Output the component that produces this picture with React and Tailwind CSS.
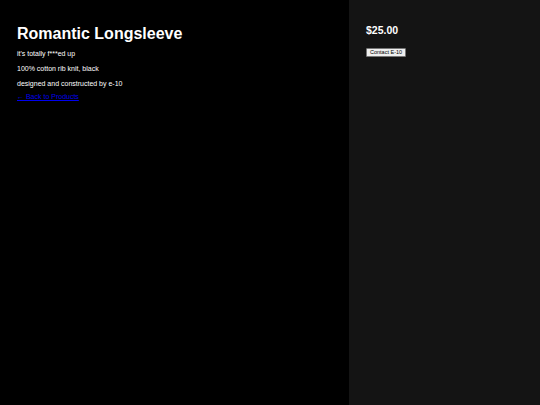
import React from "react";

const App = () => {
  return (
    <div className="flex w-full h-[405px] font-['Liberation_Sans',Arial,sans-serif] text-white">
      {/* details */}
      <div className="w-[349px] bg-black pl-[17px] pt-[24px]">
        <h1 className="text-[16px] font-bold leading-[20px]">Romantic Longsleeve</h1>
        <div className="mt-[6px] flex flex-col text-[7px] leading-[8px]">
          <p className="mb-[7px]">it's totally f***ed up</p>
          <p className="mb-[7px]">100% cotton rib knit, black</p>
          <p className="mb-[5px]">designed and constructed by e-10</p>
          <a href="#" className="text-[#0000ee] underline">
            ← Back to Products
          </a>
        </div>
      </div>
      {/* purchase */}
      <div className="flex-1 bg-[#141414] pl-[17px] pt-[24px]">
        <div className="text-[10.5px] font-bold leading-[13px]">$25.00</div>
        <button className="mt-[7px] bg-[#efefef] text-black text-[5.5px] leading-[6px] px-[3px] py-[0.5px] border border-[#767676] rounded-[1px]">
          Contact E-10
        </button>
      </div>
    </div>
  );
};

export default App;
